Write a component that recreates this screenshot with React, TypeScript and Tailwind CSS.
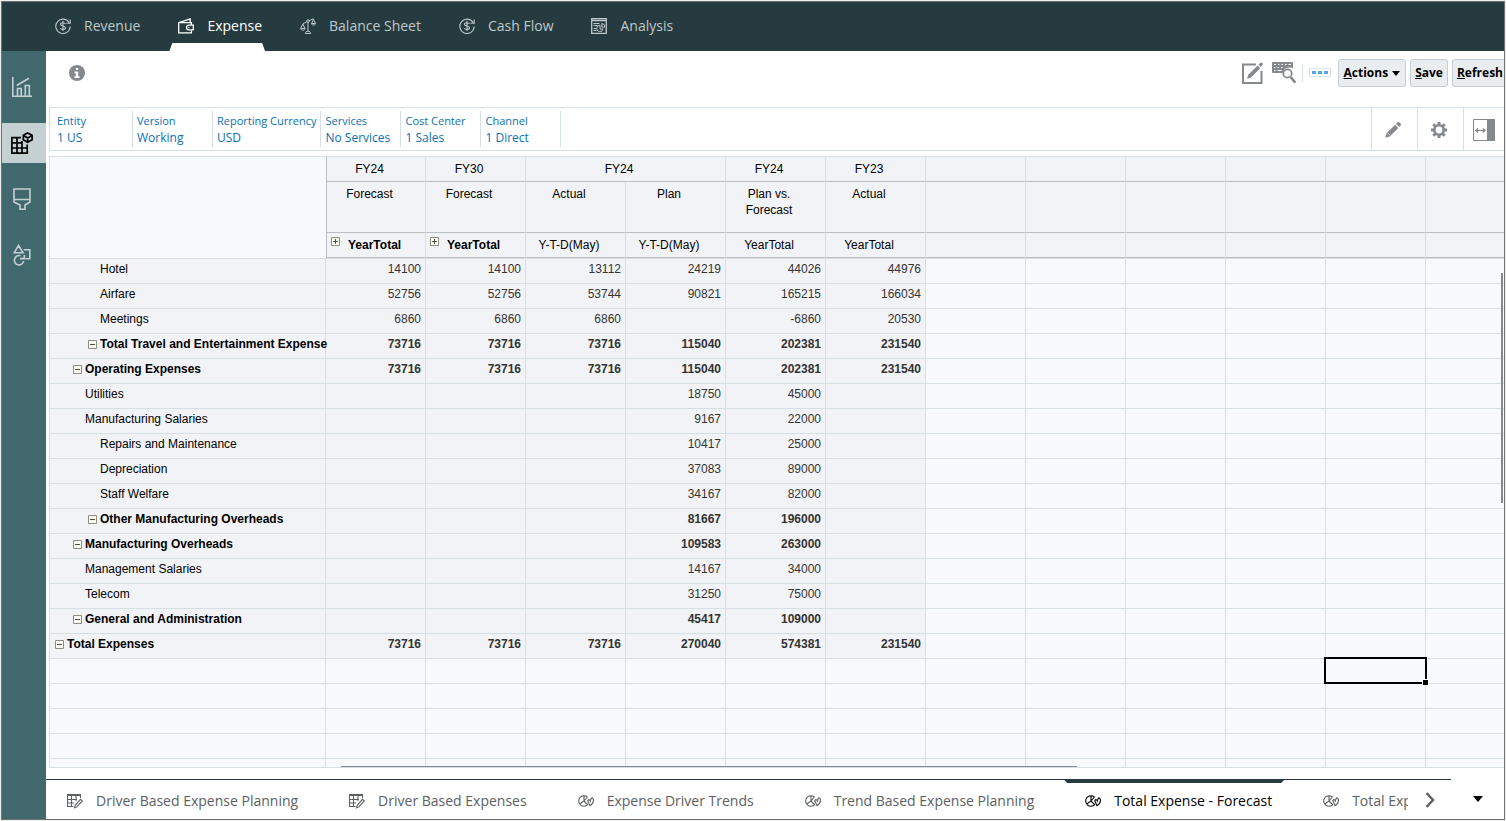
import type { ReactNode } from "react";
import clsx from "clsx";

type IconProps = { className?: string };

function DollarCycleIcon({ className }: IconProps) {
  return (
    <svg viewBox="0 0 16 16" fill="none" stroke="currentColor" strokeWidth="1.100" className={className} aria-hidden>
      <path d="M14.300 4.800A7.200 7.200 0 1 0 15.200 8.600" />
      <path d="M15.200 1.500v3.800h-3.800" />
      <path d="M10.500 6C10.100 5.200 9.200 4.700 8 4.700c-1.500 0-2.500.6-2.500 1.600 0 2.400 5 1.100 5 3.500 0 1-1 1.700-2.500 1.700-1.400 0-2.300-.5-2.700-1.400M8 3v10" />
    </svg>
  );
}

function WalletIcon({ className }: IconProps) {
  return (
    <svg viewBox="0 0 16 16" fill="none" stroke="currentColor" strokeWidth="1.300" className={className} aria-hidden>
      <path d="M13.400 7V4.700H.8L12.200 1v3.500M.7 4.200v10.600h12.700v-2.600" />
      <path d="M15.300 7.200v4.600h-4.500a2.300 2.300 0 0 1 0-4.600z" />
      <path d="M10.800 9v1" />
    </svg>
  );
}

function ScalesIcon({ className }: IconProps) {
  return (
    <svg viewBox="0 0 16 16" fill="none" stroke="currentColor" className={className} aria-hidden>
      <path d="M2.800 5.800 7 3.700M9 2.700l4.600-2M8 4.200v9M5.300 15.500c0-1.500 1-2.200 2.700-2.200s2.700.7 2.700 2.200z" />
      <circle cx="8" cy="3.100" r="1.300" />
      <path d="M2.800 6 .7 10.400h4.400zM.7 10.500c.2 2.200 4.200 2.200 4.400 0M13.500 1.300l-2 4.200h4zM11.500 5.500c.2 2.100 3.800 2.100 4 0" />
    </svg>
  );
}

function AnalysisIcon({ className }: IconProps) {
  return (
    <svg viewBox="0 0 16 16" fill="none" stroke="currentColor" className={className} aria-hidden>
      <path d="M.7.700h14.600v14.600H.7zM.7 2.500h14.600" strokeWidth="1.300" />
      <path d="M2.500 5.500h6M2.500 7.500h4M2.500 10.500h2.500M2.500 12.500h3" />
      <path d="M9 7.200a3.200 3.200 0 1 0 3 3.800H9zM10.800 5.500v3.600h3a3.300 3.300 0 0 0-3-3.600z" />
    </svg>
  );
}

function ChartIcon({ className }: IconProps) {
  return (
    <svg viewBox="0 0 20 20" fill="none" stroke="currentColor" strokeWidth="1.600" className={className} aria-hidden>
      <path d="M.8 0v19.200H20M4.700 8.500 17 1.200" />
      <path d="M5.500 19v-7.500h3.700V19M13.300 19V8.500h4V19" />
    </svg>
  );
}

function GridCubeIcon({ className }: IconProps) {
  return (
    <svg viewBox="0 0 22 22" fill="none" stroke="currentColor" strokeWidth="1.700" className={className} aria-hidden>
      <path d="M10 5.700H.9v15.400h15.300V12.500M.9 10.800h11M.9 16h15.300M6 5.700v15.400M11 9v12.100" />
      <path d="m16.700.9 4.400 2.400v4.500l-4.400 2.500-4.400-2.500V3.300zM12.300 3.400l4.400 2.500 4.400-2.500M16.700 5.900v4.400" />
    </svg>
  );
}

function BrushIcon({ className }: IconProps) {
  return (
    <svg viewBox="0 0 18 22" fill="none" stroke="currentColor" strokeWidth="1.600" className={className} aria-hidden>
      <path d="M1 1h16v13l-5 3v4.200H7V17l-6-3zM1 11.500h16" />
    </svg>
  );
}

function ShapesIcon({ className }: IconProps) {
  return (
    <svg viewBox="0 0 18 22" fill="none" stroke="currentColor" strokeWidth="1.600" className={className} aria-hidden>
      <path d="M5.500 1.500 10 8.700H1.200zM10.800 5.700h6v9h-4.500" />
      <path d="M7.500 11.700a4.700 4.700 0 1 0 3.200 5.500M7 14.600h4.300v-3.500" />
    </svg>
  );
}

function GridPencilIcon({ className }: IconProps) {
  return (
    <svg viewBox="0 0 16 16" fill="none" stroke="currentColor" strokeWidth="1.100" className={className} aria-hidden>
      <path d="M6.500 13.500h-6V1.500h13V5M.5 2.500h13M.5 6.500h9.500M.5 10h6.500M4.500 1.500v12M9 1.500V8" />
      <path d="m7.500 14.800.7-2.500 5.300-6 1.800 1.600-5.400 6z" />
    </svg>
  );
}

function PieIcon({ className }: IconProps) {
  return (
    <svg viewBox="0 0 16 12" fill="none" stroke="currentColor" strokeWidth="1.100" className={className} aria-hidden>
      <path d="M9.500 2A5.300 5.300 0 1 0 9.800 9.700M6 .7v5.300L1.700 9M6 6l3.500-4M6 6l4 4" />
      <path d="M9.700 5.500 12 10.700c2.400-1.500 3.500-3.600 3.400-5.600-.1-1.600-.9-2.400-1.600-2.200-.7.200-1 1.300-1.500 3.100-.5-1.400-1.400-2-2.600-.5z" />
    </svg>
  );
}

function FormEditIcon({ className }: IconProps) {
  return (
    <svg viewBox="0 0 22 22" className={className} aria-hidden>
      <path d="M14 2.500H1v18.500h18.500V9" fill="none" stroke="currentColor" strokeWidth="2" />
      <path d="m5 16.800 1.300-4L15.600 3.500l2.700 2.700L9 15.500zM16.500 2.600l1.600-1.600c.7-.8 1.500-.7 2.200 0s.8 1.500 0 2.200L18.800 5z" fill="currentColor" />
    </svg>
  );
}

function KeyboardSearchIcon({ className }: IconProps) {
  return (
    <svg viewBox="0 0 24 22" className={className} aria-hidden>
      <path d="M1 0h19a1 1 0 0 1 1 1v5.500a7 7 0 0 0-10.500 4.500H1a1 1 0 0 1-1-1V1a1 1 0 0 1 1-1z" fill="currentColor" />
      <path d="M2 2.500h2M6 2.500h1.500M9.500 2.500H11M13 2.500h1.500M16.500 2.500H19M2 5.500h1.500M5.500 5.500H7M9 5.500h1.500M2 8.500h1.500M5.500 8.500h4" stroke="#fff" strokeWidth="1.200" />
      <circle cx="15.500" cy="11.500" r="4.200" fill="#fff" stroke="currentColor" strokeWidth="1.800" />
      <path d="m18.800 15.200 4.500 5.500" stroke="currentColor" strokeWidth="2.600" />
    </svg>
  );
}

function PencilIcon({ className }: IconProps) {
  return (
    <svg viewBox="0 0 16 16" fill="currentColor" className={className} aria-hidden>
      <path d="m.3 15.700 1.200-4.400 8.600-8.600 3.200 3.200-8.600 8.600zM11 1.800l1.200-1.200c.8-.8 1.600-.7 2.300 0l.9.9c.7.7.8 1.500 0 2.300L14.200 5z" />
      <path d="M2.800 11.200l2 2" stroke="#fff" strokeWidth=".8" />
    </svg>
  );
}

function GearIcon({ className }: IconProps) {
  return (
    <svg viewBox="0 0 16 16" className={className} aria-hidden>
      <circle cx="8" cy="8" r="4.700" fill="none" stroke="currentColor" strokeWidth="2.600" />
      <path
        d="M8 0v3M8 13v3M0 8h3M13 8h3M2.300 2.300l2.200 2.200M11.500 11.500l2.200 2.200M2.300 13.700l2.200-2.200M11.500 4.500l2.200-2.200"
        stroke="currentColor"
        strokeWidth="3"
      />
    </svg>
  );
}

function PanelIcon({ className }: IconProps) {
  return (
    <svg viewBox="0 0 22 22" className={className} aria-hidden>
      <path d="M.5.500h21v21H.5z" fill="#fff" stroke="currentColor" />
      <path d="M14 0h8v22h-8z" fill="currentColor" />
      <path d="M3 11.500h9" stroke="currentColor" strokeWidth="1.200" />
      <path d="M1.800 11.500 5 8.700v5.600zM13 11.500 9.800 8.700v5.600z" fill="currentColor" />
    </svg>
  );
}

const modules = [
  { label: "Revenue", icon: DollarCycleIcon },
  { label: "Expense", icon: WalletIcon, active: true },
  { label: "Balance Sheet", icon: ScalesIcon },
  { label: "Cash Flow", icon: DollarCycleIcon },
  { label: "Analysis", icon: AnalysisIcon },
];

const sideLinks = [
  { label: "Dashboards", icon: ChartIcon, size: "h-5 w-5" },
  { label: "Forms", icon: GridCubeIcon, size: "h-[22px] w-[22px]", active: true },
  { label: "Drivers", icon: BrushIcon, size: "h-[22px] w-[18px]" },
  { label: "Other", icon: ShapesIcon, size: "h-[22px] w-[18px]" },
];

const pov = [
  ["Entity", "1 US"],
  ["Version", "Working"],
  ["Reporting Currency", "USD"],
  ["Services", "No Services"],
  ["Cost Center", "1 Sales"],
  ["Channel", "1 Direct"],
];

const formTabs = [
  { label: "Driver Based Expense Planning", icon: GridPencilIcon, size: "h-4 w-4" },
  { label: "Driver Based Expenses", icon: GridPencilIcon, size: "h-4 w-4" },
  { label: "Expense Driver Trends", icon: PieIcon, size: "h-3 w-4" },
  { label: "Trend Based Expense Planning", icon: PieIcon, size: "h-3 w-4" },
  { label: "Total Expense - Forecast", icon: PieIcon, size: "h-3 w-4", active: true },
  { label: "Total Expense", icon: PieIcon, size: "h-3 w-4" },
];

type Row = { label: string; indent: string; total?: boolean; values: string[] };

const rows: Row[] = [
  { label: "Hotel", indent: "pl-[50px]", values: ["14100", "14100", "13112", "24219", "44026", "44976"] },
  { label: "Airfare", indent: "pl-[50px]", values: ["52756", "52756", "53744", "90821", "165215", "166034"] },
  { label: "Meetings", indent: "pl-[50px]", values: ["6860", "6860", "6860", "", "-6860", "20530"] },
  {
    label: "Total Travel and Entertainment Expense",
    indent: "pl-[38px]",
    total: true,
    values: ["73716", "73716", "73716", "115040", "202381", "231540"],
  },
  {
    label: "Operating Expenses",
    indent: "pl-[23px]",
    total: true,
    values: ["73716", "73716", "73716", "115040", "202381", "231540"],
  },
  { label: "Utilities", indent: "pl-[35px]", values: ["", "", "", "18750", "45000", ""] },
  { label: "Manufacturing Salaries", indent: "pl-[35px]", values: ["", "", "", "9167", "22000", ""] },
  { label: "Repairs and Maintenance", indent: "pl-[50px]", values: ["", "", "", "10417", "25000", ""] },
  { label: "Depreciation", indent: "pl-[50px]", values: ["", "", "", "37083", "89000", ""] },
  { label: "Staff Welfare", indent: "pl-[50px]", values: ["", "", "", "34167", "82000", ""] },
  { label: "Other Manufacturing Overheads", indent: "pl-[38px]", total: true, values: ["", "", "", "81667", "196000", ""] },
  { label: "Manufacturing Overheads", indent: "pl-[23px]", total: true, values: ["", "", "", "109583", "263000", ""] },
  { label: "Management Salaries", indent: "pl-[35px]", values: ["", "", "", "14167", "34000", ""] },
  { label: "Telecom", indent: "pl-[35px]", values: ["", "", "", "31250", "75000", ""] },
  { label: "General and Administration", indent: "pl-[23px]", total: true, values: ["", "", "", "45417", "109000", ""] },
  {
    label: "Total Expenses",
    indent: "pl-[5px]",
    total: true,
    values: ["73716", "73716", "73716", "270040", "574381", "231540"],
  },
];

const spareCols = [0, 1, 2, 3, 4, 5];
const spareRows = [0, 1, 2, 3, 4];

function Toggle({ open, label }: { open: boolean; label: string }) {
  return (
    <button type="button" aria-label={label} aria-expanded={open} className="h-[9px] w-[9px] shrink-0 text-[#4d4d42]">
      <svg viewBox="0 0 9 9" className="block h-[9px] w-[9px]" fill="none" aria-hidden>
        <path d="M.5.500h8v8h-8z" fill="#fbfbf3" stroke="#8e8e80" />
        <path d={open ? "M2 4.500h5" : "M2 4.500h5M4.500 2v5"} stroke="currentColor" />
      </svg>
    </button>
  );
}

function HeadCell({
  children,
  span,
  first,
  last,
}: {
  children?: ReactNode;
  span?: number;
  first?: boolean;
  last?: boolean;
}) {
  return (
    <th
      colSpan={span}
      scope="col"
      className={clsx(
        "border-r border-b border-r-[#d6dfe6] bg-[#f2f3f7] pt-1 pr-[13px] align-top font-normal text-black",
        last ? "border-b-[#d6dfe6] shadow-[inset_0_-1px_0_#bcbfc1]" : "border-b-[#bcbfc1]",
        first && "border-l border-l-[#bcbfc1]",
      )}
    >
      {children}
    </th>
  );
}

function PlanGrid() {
  return (
    <table className="w-[1476px] table-fixed border-separate border-spacing-0 font-['Liberation_Sans',Arial,sans-serif] text-[12px] leading-4">
      <colgroup>
        <col className="w-[276px]" />
        {[...rows[0].values, ...spareCols].map((_, i) => (
          <col key={i} className="w-[100px]" />
        ))}
      </colgroup>
      <thead>
        <tr className="h-[25px]">
          <td rowSpan={3} className="border-b border-[#d6dfe6] bg-[#f8f9fd]" />
          <HeadCell first>FY24</HeadCell>
          <HeadCell>FY30</HeadCell>
          <HeadCell span={2}>FY24</HeadCell>
          <HeadCell>FY24</HeadCell>
          <HeadCell>FY23</HeadCell>
          {spareCols.map((c) => (
            <HeadCell key={c} />
          ))}
        </tr>
        <tr className="h-[51px]">
          <HeadCell first>Forecast</HeadCell>
          <HeadCell>Forecast</HeadCell>
          <HeadCell>Actual</HeadCell>
          <HeadCell>Plan</HeadCell>
          <HeadCell>
            Plan vs.
            <br />
            Forecast
          </HeadCell>
          <HeadCell>Actual</HeadCell>
          {spareCols.map((c) => (
            <HeadCell key={c} />
          ))}
        </tr>
        <tr className="h-[26px]">
          {[true, false].map((first) => (
            <HeadCell key={String(first)} first={first} last>
              <span className="flex items-start gap-2 pl-1 font-bold">
                <Toggle open={false} label="Expand YearTotal" />
                YearTotal
              </span>
            </HeadCell>
          ))}
          <HeadCell last>Y-T-D(May)</HeadCell>
          <HeadCell last>Y-T-D(May)</HeadCell>
          <HeadCell last>YearTotal</HeadCell>
          <HeadCell last>YearTotal</HeadCell>
          {spareCols.map((c) => (
            <HeadCell key={c} last />
          ))}
        </tr>
      </thead>
      <tbody>
        {rows.map((r) => (
          <tr key={r.label} className={clsx("h-[25px]", r.total && "font-bold")}>
            <th
              scope="row"
              className={clsx(
                "border-r border-b border-[#d6dfe6] bg-[#f2f3f7] pt-0.5 text-left align-top whitespace-nowrap text-black",
                r.total ? "font-bold" : "font-normal",
                r.indent,
              )}
            >
              <span className="flex items-center gap-[3px]">
                {r.total && <Toggle open label={"Collapse " + r.label} />}
                {r.label}
              </span>
            </th>
            {r.values.map((v, i) => (
              <td
                key={i}
                className="border-r border-b border-[#d6dfe6] bg-[#f2f3f7] pt-0.5 pr-1 text-right align-top text-[#333]"
              >
                {v}
              </td>
            ))}
            {spareCols.map((c) => (
              <td key={c} className="border-r border-b border-[#d6dfe6] bg-[#f8f9fd]" />
            ))}
          </tr>
        ))}
        {spareRows.map((row) => (
          <tr key={row} className="h-[25px]">
            {[...rows[0].values, ...spareCols, 0].map((_, i) => (
              <td key={i} className="relative border-r border-b border-[#d6dfe6] bg-[#f8f9fd]">
                {row === 0 && i === 11 && (
                  <span className="absolute -inset-x-0.5 -top-0.5 -bottom-px z-10 border-2 border-black">
                    <span className="absolute -right-1 -bottom-1 h-[7px] w-[7px] border border-white bg-black" />
                  </span>
                )}
              </td>
            ))}
          </tr>
        ))}
      </tbody>
    </table>
  );
}

const toolButton =
  "h-7 rounded-[3px] border border-[#c4ced7] bg-[#e9edef] font-bold whitespace-nowrap text-black";

function Toolbar() {
  return (
    <div className="flex h-14 items-start pt-2 pl-[23px] text-[12px]">
      <button
        type="button"
        aria-label="Information"
        className="mt-1.5 flex h-4 w-4 items-center justify-center rounded-full bg-[#85898e] text-white"
      >
        <svg viewBox="0 0 6 10" className="h-[10px] w-[6px]" fill="currentColor" aria-hidden>
          <path d="M1.800 0h2.400v2H1.800zM.5 3.500h3.700v4.700h1.300V10H.5V8.200h1.300V5.200H.5z" />
        </svg>
      </button>
      <div className="ml-auto flex items-center text-[#85898e]">
        <button type="button" aria-label="Edit form">
          <FormEditIcon className="h-[22px] w-[22px]" />
        </button>
        <button type="button" aria-label="Search shortcuts" className="ml-2">
          <KeyboardSearchIcon className="h-[22px] w-6" />
        </button>
        <span className="ml-1.5 h-[18px] w-px bg-[#d6dfe6]" />
        <button
          type="button"
          aria-label="More"
          className="mb-0.5 ml-1.5 flex h-[9px] w-[22px] items-center justify-center gap-0.5 border border-[#dde5eb]"
        >
          <span className="h-[3px] w-1 bg-[#5aa5ea]" />
          <span className="h-[3px] w-1 bg-[#5aa5ea]" />
          <span className="h-[3px] w-1 bg-[#5aa5ea]" />
        </button>
        <button type="button" className={clsx(toolButton, "ml-[7px] flex items-center gap-1 px-[5px]")}>
          <span>
            <u>A</u>ctions
          </span>
          <svg viewBox="0 0 8 5" className="h-[5px] w-2" fill="currentColor" aria-hidden>
            <path d="M0 0h8L4 5z" />
          </svg>
        </button>
        <button type="button" className={clsx(toolButton, "ml-1 px-1")}>
          <u>S</u>ave
        </button>
        <button type="button" className={clsx(toolButton, "ml-1 rounded-r-none border-r-0 pr-px pl-1")}>
          <u>R</u>efresh
        </button>
      </div>
    </div>
  );
}

function PovBar() {
  return (
    <div className="ml-[3px] flex h-11 border border-r-0 border-[#d6dfe6] pl-[3px]">
      {pov.map(([dim, member]) => (
        <button
          key={dim}
          type="button"
          className="my-[3px] min-w-20 border-r border-[#d6dfe6] px-1 text-left leading-[17px] whitespace-nowrap text-[#0b6fb5]"
        >
          <span className="block text-[11px]">{dim}</span>
          <span className="block text-[12px]">{member}</span>
        </button>
      ))}
      <div className="ml-auto flex text-[#85898e]">
        <button type="button" aria-label="Edit" className="flex w-[46px] items-center justify-center border-l border-[#d6dfe6] pt-0.5 pr-1">
          <PencilIcon className="h-4 w-4" />
        </button>
        <button type="button" aria-label="Settings" className="flex w-[46px] items-center justify-center border-l border-[#d6dfe6] pt-0.5 pr-1">
          <GearIcon className="h-4 w-4" />
        </button>
        <button type="button" aria-label="Toggle panel" className="flex w-[41px] items-center justify-center border-l border-[#d6dfe6] pt-0.5">
          <PanelIcon className="h-[22px] w-[22px]" />
        </button>
      </div>
    </div>
  );
}

export default function App() {
  return (
    <div className="h-screen bg-[#ededed] p-px font-['Open_Sans','Noto_Sans',sans-serif]">
      <div className="flex h-full flex-col overflow-hidden border border-[#6f7375] bg-white">
        <nav className="flex h-[49px] shrink-0 gap-[26px] bg-[#253b40] pl-11 text-[14px]">
          {modules.map(({ label, icon: Icon, active }) => (
            <a
              key={label}
              href="#"
              className={clsx(
                "relative flex items-center gap-[13px] pr-[3px] pb-0.5 pl-[9px] whitespace-nowrap",
                active ? "text-white" : "text-[#bfc8ca]",
              )}
            >
              <Icon className="h-4 w-4" />
              {label}
              {active && (
                <span className="absolute inset-x-0 bottom-0 h-2 bg-white [clip-path:polygon(3px_0,calc(100%-3px)_0,100%_100%,0_100%)]" />
              )}
            </a>
          ))}
        </nav>
        <div className="flex min-h-0 flex-1">
          <aside className="flex w-11 shrink-0 flex-col gap-4 bg-[#41696d] pt-4">
            {sideLinks.map(({ label, icon: Icon, size, active }) => (
              <a
                key={label}
                href="#"
                aria-label={label}
                className={clsx(
                  "flex h-10 items-center justify-center pr-1",
                  active ? "bg-[#c5d0d2] text-black" : "text-[#c5d0d2]",
                )}
              >
                <Icon className={size} />
              </a>
            ))}
          </aside>
          <main className="flex min-w-0 flex-1 flex-col">
            <Toolbar />
            <PovBar />
            <div className="relative mt-[5px] ml-[3px] min-h-0 flex-1 overflow-hidden border border-r-0 border-[#d6dfe6]">
              <PlanGrid />
              <span className="absolute top-[19%] right-px h-[230px] w-0.5 bg-[#85898e]" />
              <span className="absolute bottom-0 left-[20%] h-px w-[736px] bg-[#85898e]" />
            </div>
            <footer className="mt-[11px] flex h-10 shrink-0">
              <div className="flex min-w-0 flex-1 border-t border-[#253b40] text-[14px]">
                <div className="flex min-w-0 flex-1 overflow-hidden">
                  {formTabs.map(({ label, icon: Icon, size, active }) => (
                    <a
                      key={label}
                      href="#"
                      className={clsx(
                        "relative mr-[18px] flex shrink-0 items-center gap-[13px] pt-0.5 pr-3 pl-[21px] whitespace-nowrap",
                        active ? "text-black" : "text-[#5c6063]",
                      )}
                    >
                      {active && (
                        <span className="absolute inset-x-0 top-0 h-[3px] bg-[#253b40] [clip-path:polygon(0_0,100%_0,calc(100%-3px)_100%,3px_100%)]" />
                      )}
                      <Icon className={size} />
                      {label}
                    </a>
                  ))}
                </div>
                <button type="button" aria-label="Next tabs" className="flex w-[43px] items-center justify-center text-[#5c6063]">
                  <svg viewBox="0 0 10 16" className="h-4 w-[10px]" fill="none" stroke="currentColor" strokeWidth="2.400" aria-hidden>
                    <path d="m1.500 1 6.500 7-6.500 7" />
                  </svg>
                </button>
              </div>
              <button type="button" aria-label="All tabs" className="flex w-[53px] items-center justify-center text-black">
                <svg viewBox="0 0 10 6" className="h-1.5 w-[10px]" fill="currentColor" aria-hidden>
                  <path d="M0 0h10L5 6z" />
                </svg>
              </button>
            </footer>
          </main>
        </div>
      </div>
    </div>
  );
}
